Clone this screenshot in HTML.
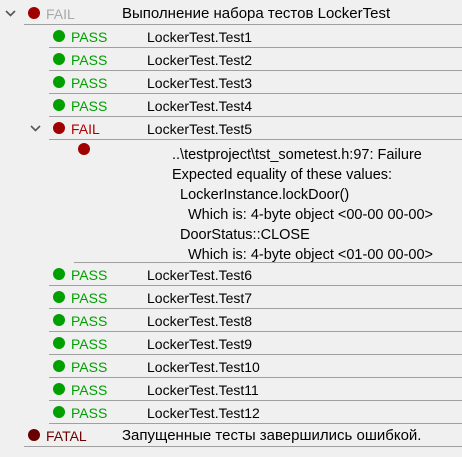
<!DOCTYPE html>
<html><head><meta charset="utf-8"><style>
body{margin:0;width:462px;height:457px;background:#f0f0f0;font-family:"Segoe UI","Liberation Sans","DejaVu Sans",sans-serif;font-size:14px;color:#000;position:relative;overflow:hidden}
.a{position:absolute;white-space:nowrap;line-height:20px}
.sep{position:absolute;height:1px;background:#a0a0a0;right:0}
.dot{position:absolute;width:12px;height:12px;border-radius:50%}
.g{background:#00a000}.r{background:#a00000}.f{background:#680000}
.pass{color:#00a000}.fail{color:#b00000}
.ru{font-size:15px}
.d{font-size:14.5px}
svg{position:absolute}
</style></head><body>
<svg style="left:5px;top:9px" width="11" height="8"><path d="M1 2 L5.5 6.5 L10 2" fill="none" stroke="#555" stroke-width="1.6"/></svg>
<div class="dot r" style="left:28px;top:7px"></div>
<div class="a" style="left:46px;top:4px;color:#a8a8a8">FAIL</div>
<div class="a ru" style="left:122px;top:4px">Выполнение набора тестов LockerTest</div>
<div class="sep" style="left:24px;top:24px"></div>

<div class="dot g" style="left:53px;top:30px"></div><div class="a pass" style="left:71px;top:27px">PASS</div><div class="a" style="left:147px;top:27px">LockerTest.Test1</div><div class="sep" style="left:49px;top:47px"></div>
<div class="dot g" style="left:53px;top:53px"></div><div class="a pass" style="left:71px;top:50px">PASS</div><div class="a" style="left:147px;top:50px">LockerTest.Test2</div><div class="sep" style="left:49px;top:70px"></div>
<div class="dot g" style="left:53px;top:76px"></div><div class="a pass" style="left:71px;top:73px">PASS</div><div class="a" style="left:147px;top:73px">LockerTest.Test3</div><div class="sep" style="left:49px;top:93px"></div>
<div class="dot g" style="left:53px;top:99px"></div><div class="a pass" style="left:71px;top:96px">PASS</div><div class="a" style="left:147px;top:96px">LockerTest.Test4</div><div class="sep" style="left:49px;top:116px"></div>
<svg style="left:30px;top:124px" width="11" height="8"><path d="M1 2 L5.5 6.5 L10 2" fill="none" stroke="#555" stroke-width="1.6"/></svg>
<div class="dot r" style="left:53px;top:122px"></div><div class="a fail" style="left:71px;top:119px">FAIL</div><div class="a" style="left:147px;top:119px">LockerTest.Test5</div><div class="sep" style="left:49px;top:139px"></div>

<div class="dot r" style="left:78px;top:143px"></div>
<div class="a d" style="left:172px;top:145px">..\testproject\tst_sometest.h:97: Failure</div>
<div class="a d" style="left:172px;top:165px">Expected equality of these values:</div>
<div class="a d" style="left:180px;top:185px">LockerInstance.lockDoor()</div>
<div class="a d" style="left:188px;top:205px">Which is: 4-byte object &lt;00-00 00-00&gt;</div>
<div class="a d" style="left:180px;top:225px">DoorStatus::CLOSE</div>
<div class="a d" style="left:188px;top:245px">Which is: 4-byte object &lt;01-00 00-00&gt;</div>
<div class="sep" style="left:74px;top:262px"></div>

<div class="dot g" style="left:53px;top:268px"></div><div class="a pass" style="left:71px;top:265px">PASS</div><div class="a" style="left:147px;top:265px">LockerTest.Test6</div><div class="sep" style="left:49px;top:285px"></div>
<div class="dot g" style="left:53px;top:291px"></div><div class="a pass" style="left:71px;top:288px">PASS</div><div class="a" style="left:147px;top:288px">LockerTest.Test7</div><div class="sep" style="left:49px;top:308px"></div>
<div class="dot g" style="left:53px;top:314px"></div><div class="a pass" style="left:71px;top:311px">PASS</div><div class="a" style="left:147px;top:311px">LockerTest.Test8</div><div class="sep" style="left:49px;top:331px"></div>
<div class="dot g" style="left:53px;top:337px"></div><div class="a pass" style="left:71px;top:334px">PASS</div><div class="a" style="left:147px;top:334px">LockerTest.Test9</div><div class="sep" style="left:49px;top:354px"></div>
<div class="dot g" style="left:53px;top:360px"></div><div class="a pass" style="left:71px;top:357px">PASS</div><div class="a" style="left:147px;top:357px">LockerTest.Test10</div><div class="sep" style="left:49px;top:377px"></div>
<div class="dot g" style="left:53px;top:383px"></div><div class="a pass" style="left:71px;top:380px">PASS</div><div class="a" style="left:147px;top:380px">LockerTest.Test11</div><div class="sep" style="left:49px;top:400px"></div>
<div class="dot g" style="left:53px;top:406px"></div><div class="a pass" style="left:71px;top:403px">PASS</div><div class="a" style="left:147px;top:403px">LockerTest.Test12</div><div class="sep" style="left:49px;top:423px"></div>

<div class="dot f" style="left:28px;top:429px"></div><div class="a" style="left:46px;top:426px;color:#6a0000">FATAL</div><div class="a ru" style="left:122px;top:426px">Запущенные тесты завершились ошибкой.</div>
<div class="sep" style="left:24px;top:446px"></div>
</body></html>
